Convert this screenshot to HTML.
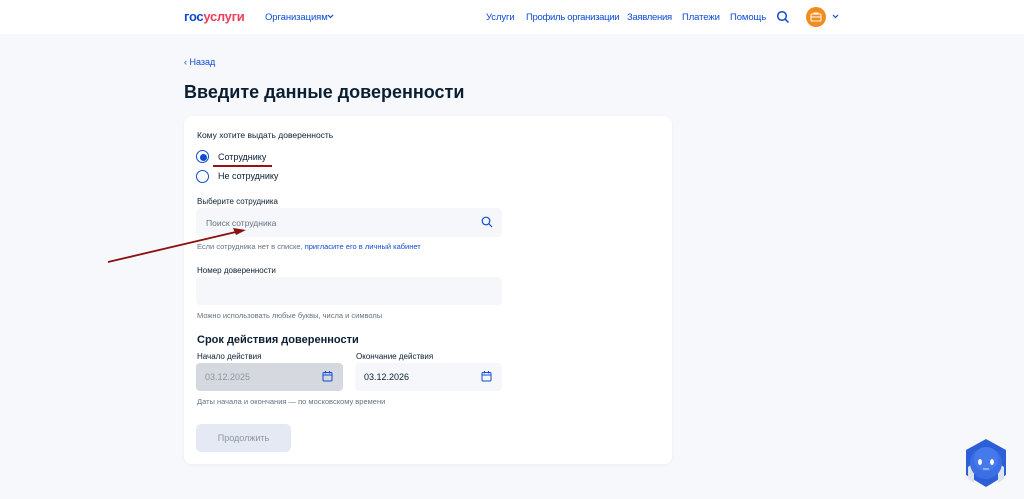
<!DOCTYPE html>
<html><head><meta charset="utf-8"><style>
*{margin:0;padding:0;box-sizing:border-box}
body{width:1024px;height:499px;overflow:hidden;background:#f6f8fb;font-family:"Liberation Sans",sans-serif;color:#0b1f33;position:relative}
.hdr{position:absolute;left:0;top:0;width:1024px;height:34px;background:#fff}
.a{position:absolute;white-space:nowrap}
.nav{font-size:9.5px;color:#0d4cd3;top:12px;letter-spacing:-0.1px}
.card{position:absolute;left:184px;top:116px;width:488px;height:348px;background:#fff;border-radius:8px;box-shadow:0 1px 4px rgba(0,0,0,.04)}
.lbl{font-size:8px;color:#0b1f33}
.hint{font-size:7.5px;color:#66727f}
.inp{position:absolute;background:#f5f7fa;border-radius:4px}
.radio{position:absolute;width:13px;height:13px;border:1.5px solid #0d4cd3;border-radius:50%}
</style></head><body>
<div class="hdr"></div>
<div class="a" style="left:184px;top:9px;font-size:13px;font-weight:bold;letter-spacing:-0.3px"><span style="color:#0d4cd3">гос</span><span style="color:#ee3f58">услуги</span></div>
<div class="a nav" style="left:265px">Организациям</div>
<svg class="a" style="left:327px;top:14px" width="7" height="5" viewBox="0 0 7 5"><path d="M1 1l2.5 2.5L6 1" stroke="#0d4cd3" stroke-width="1.2" fill="none"/></svg>
<div class="a nav" style="left:486px">Услуги</div>
<div class="a nav" style="left:526px;letter-spacing:-0.3px">Профиль организации</div>
<div class="a nav" style="left:627px;letter-spacing:-0.3px">Заявления</div>
<div class="a nav" style="left:682px">Платежи</div>
<div class="a nav" style="left:730px">Помощь</div>
<svg class="a" style="left:776px;top:10px" width="14" height="14" viewBox="0 0 14 14"><circle cx="6" cy="6" r="4.3" fill="none" stroke="#0d4cd3" stroke-width="1.5"/><path d="M9.2 9.2L12.5 12.5" stroke="#0d4cd3" stroke-width="1.5"/></svg>
<div class="a" style="left:806px;top:7px;width:20px;height:20px;border-radius:50%;background:#f28c1c"></div>
<svg class="a" style="left:810px;top:12px" width="12" height="10" viewBox="0 0 12 10"><rect x="1" y="2" width="10" height="7" rx="1" fill="none" stroke="#fff" stroke-width="1"/><path d="M4 2V1h4v1M1 5h10" stroke="#fff" stroke-width="1" fill="none"/></svg>
<svg class="a" style="left:832px;top:14px" width="7" height="5" viewBox="0 0 7 5"><path d="M1 1l2.5 2.5L6 1" stroke="#0d4cd3" stroke-width="1.2" fill="none"/></svg>
<div class="a" style="left:184px;top:57px;font-size:9px;color:#0d4cd3">‹ Назад</div>
<div class="a" style="left:184px;top:82px;font-size:18px;font-weight:bold">Введите данные доверенности</div>
<div class="card"></div>
<div class="a lbl" style="left:197px;top:130px;font-size:8.5px">Кому хотите выдать доверенность</div>
<div class="radio" style="left:196px;top:150px"></div><div class="a" style="left:200px;top:154px;width:7px;height:7px;border-radius:50%;background:#0d4cd3"></div>
<div class="a" style="left:218px;top:152px;font-size:9px">Сотруднику</div>
<div class="a" style="left:213px;top:165px;width:59px;height:1.5px;background:#9b1111"></div>
<div class="radio" style="left:196px;top:170px"></div>
<div class="a" style="left:218px;top:171px;font-size:9px">Не сотруднику</div>
<div class="a lbl" style="left:197px;top:197px">Выберите сотрудника</div>
<div class="inp" style="left:196px;top:208px;width:306px;height:29px"></div>
<div class="a" style="left:206px;top:218px;font-size:8.5px;color:#66727f">Поиск сотрудника</div>
<svg class="a" style="left:481px;top:216px" width="12" height="12" viewBox="0 0 12 12"><circle cx="5" cy="5" r="3.8" fill="none" stroke="#0d4cd3" stroke-width="1.2"/><path d="M8 8l3 3" stroke="#0d4cd3" stroke-width="1.2"/></svg>
<div class="a hint" style="left:197px;top:242px">Если сотрудника нет в списке, <span style="color:#0d4cd3">пригласите его в личный кабинет</span></div>
<div class="a lbl" style="left:197px;top:266px">Номер доверенности</div>
<div class="inp" style="left:196px;top:277px;width:306px;height:28px"></div>
<div class="a hint" style="left:197px;top:311px">Можно использовать любые буквы, числа и символы</div>
<div class="a" style="left:197px;top:334px;font-size:11px;font-weight:bold">Срок действия доверенности</div>
<div class="a lbl" style="left:197px;top:352px">Начало действия</div>
<div class="a lbl" style="left:356px;top:352px">Окончание действия</div>
<div class="inp" style="left:196px;top:363px;width:147px;height:28px;background:#d5d9df"></div>
<div class="inp" style="left:355px;top:363px;width:147px;height:28px"></div>
<div class="a" style="left:205px;top:372px;font-size:9px;color:#8b96a3">03.12.2025</div>
<div class="a" style="left:364px;top:372px;font-size:9px">03.12.2026</div>
<svg class="a" style="left:322px;top:371px" width="11" height="11" viewBox="0 0 11 11"><rect x="1" y="1.5" width="9" height="8.5" rx="1" fill="none" stroke="#0d4cd3" stroke-width="1"/><path d="M1 4h9M3.5 0v2.5M7.5 0v2.5" stroke="#0d4cd3" stroke-width="1"/></svg>
<svg class="a" style="left:481px;top:371px" width="11" height="11" viewBox="0 0 11 11"><rect x="1" y="1.5" width="9" height="8.5" rx="1" fill="none" stroke="#0d4cd3" stroke-width="1"/><path d="M1 4h9M3.5 0v2.5M7.5 0v2.5" stroke="#0d4cd3" stroke-width="1"/></svg>
<div class="a hint" style="left:197px;top:397px">Даты начала и окончания — по московскому времени</div>
<div class="a" style="left:196px;top:424px;width:95px;height:28px;background:#e4e9f3;border-radius:5px;font-size:9px;color:#8b96a3;text-align:center;line-height:28px">Продолжить</div>
<svg class="a" style="left:0;top:0" width="300" height="300"><path d="M108 262L240 231" stroke="#8b0f0f" stroke-width="1.8"/><path d="M246 230L233 228L236 235Z" fill="#8b0f0f"/></svg>
<svg class="a" style="left:962px;top:437px" width="48" height="52" viewBox="0 0 48 52"><path d="M24 2L44 13V38L24 50L4 38V13Z" fill="#2d5fd8"/><path d="M6 30L12 26V46L6 42ZM42 30L36 26V46L42 42Z" fill="#dde3ea"/><circle cx="24" cy="26" r="16" fill="#3b6fe6"/><circle cx="24" cy="22" r="12" fill="#4e82f0" opacity=".6"/><ellipse cx="18" cy="25" rx="2" ry="3" fill="#fff"/><ellipse cx="30" cy="25" rx="2" ry="3" fill="#fff"/><path d="M21 32h6" stroke="#dde3ff" stroke-width="1"/></svg>
</body></html>
